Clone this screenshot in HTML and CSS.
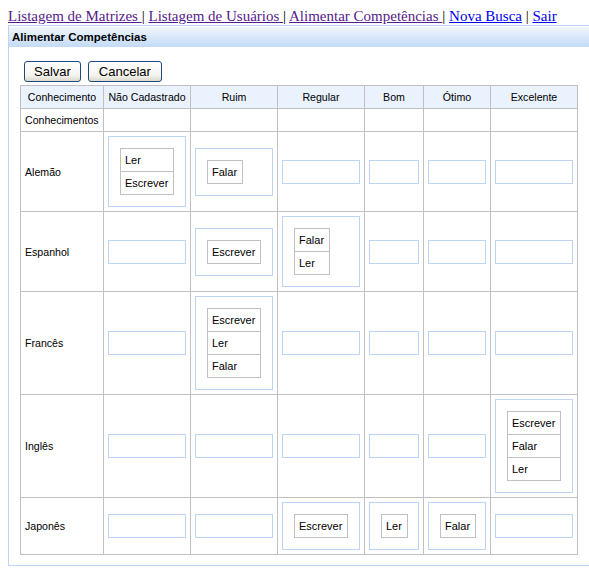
FILE: index.html
```html
<!DOCTYPE html>
<html lang="pt">
<head>
<meta charset="utf-8">
<title>Alimentar Competências</title>
<link rel="stylesheet" href="styles.css">
</head>
<body>
<div class="nav"><a class="visited" href="#">Listagem de Matrizes </a>| <a class="visited" href="#">Listagem de Usuários </a>| <a class="visited" href="#">Alimentar Competências </a>| <a href="#">Nova Busca</a> | <a href="#">Sair</a></div>
<div class="panel">
  <div class="panel-head">Alimentar Competências</div>
  <div class="panel-body">
    <div class="toolbar">
      <button class="btn" type="button">Salvar</button>
      <button class="btn" type="button">Cancelar</button>
    </div>
    <table class="grid">
      <thead>
        <tr>
          <th class="c1">Conhecimento</th>
          <th class="c2">Não Cadastrado</th>
          <th class="c3">Ruim</th>
          <th class="c4">Regular</th>
          <th class="c5">Bom</th>
          <th class="c6">Ótimo</th>
          <th class="c7">Excelente</th>
        </tr>
      </thead>
      <tbody>
        <tr>
          <td class="label">Conhecimentos</td>
          <td></td><td></td><td></td><td></td><td></td><td></td>
        </tr>
        <tr>
          <td class="label">Alemão</td>
          <td><div class="zone"><div class="list"><div class="item">Ler</div><div class="item">Escrever</div></div></div></td>
          <td><div class="zone"><div class="list"><div class="item">Falar</div></div></div></td>
          <td><div class="zone"></div></td>
          <td><div class="zone"></div></td>
          <td><div class="zone"></div></td>
          <td><div class="zone"></div></td>
        </tr>
        <tr>
          <td class="label">Espanhol</td>
          <td><div class="zone"></div></td>
          <td><div class="zone"><div class="list"><div class="item">Escrever</div></div></div></td>
          <td><div class="zone"><div class="list"><div class="item">Falar</div><div class="item">Ler</div></div></div></td>
          <td><div class="zone"></div></td>
          <td><div class="zone"></div></td>
          <td><div class="zone"></div></td>
        </tr>
        <tr>
          <td class="label">Francês</td>
          <td><div class="zone"></div></td>
          <td><div class="zone"><div class="list"><div class="item">Escrever</div><div class="item">Ler</div><div class="item">Falar</div></div></div></td>
          <td><div class="zone"></div></td>
          <td><div class="zone"></div></td>
          <td><div class="zone"></div></td>
          <td><div class="zone"></div></td>
        </tr>
        <tr>
          <td class="label">Inglês</td>
          <td><div class="zone"></div></td>
          <td><div class="zone"></div></td>
          <td><div class="zone"></div></td>
          <td><div class="zone"></div></td>
          <td><div class="zone"></div></td>
          <td><div class="zone"><div class="list"><div class="item">Escrever</div><div class="item">Falar</div><div class="item">Ler</div></div></div></td>
        </tr>
        <tr>
          <td class="label">Japonês</td>
          <td><div class="zone"></div></td>
          <td><div class="zone"></div></td>
          <td><div class="zone"><div class="list"><div class="item">Escrever</div></div></div></td>
          <td><div class="zone"><div class="list"><div class="item">Ler</div></div></div></td>
          <td><div class="zone"><div class="list"><div class="item">Falar</div></div></div></td>
          <td><div class="zone"></div></td>
        </tr>
      </tbody>
    </table>
  </div>
</div>
</body>
</html>
```

FILE: styles.css
```css
html, body {
  background: #ffffff;
}
body {
  margin: 8px 0 0 8px;
  font-family: "Liberation Sans", Arial, sans-serif;
  color: #000;
}
.nav {
  font-family: "Liberation Serif", "Times New Roman", serif;
  font-size: 15px;
  line-height: 17px;
  height: 17px;
  white-space: nowrap;
  color: #000;
}
.nav a {
  color: #0000ee;
  text-decoration: underline;
}
.nav a.visited {
  color: #551a8b;
}
.panel {
  border: 1px solid #bcd5f5;
  border-right: none;
}
.panel-head {
  height: 20px;
  border-top: 1px solid #ffffff;
  background: linear-gradient(#f0f6fe, #c3dbf7);
  font-weight: bold;
  font-size: 11.5px;
  line-height: 20px;
  padding-left: 3px;
  color: #000;
}
.panel-body {
  padding: 14px 0 10px 11px;
}
.toolbar {
  display: flex;
  gap: 7px;
  margin-left: 4px;
  margin-bottom: 3px;
}
.btn {
  height: 21px;
  padding: 0 9px;
  margin: 0;
  border: 1px solid #1c4a7c;
  border-radius: 3px;
  background: linear-gradient(#ffffff, #f4f3ee 70%, #dcd8cc);
  font-family: "Liberation Sans", Arial, sans-serif;
  font-size: 13px;
  line-height: 19px;
  color: #000;
}
.btn + .btn {
  padding: 0 10px;
}
.grid {
  table-layout: fixed;
  border-collapse: separate;
  border-spacing: 0;
  border-top: 1px solid #c0c0c0;
  border-left: 1px solid #c0c0c0;
  width: 558px;
  font-size: 10.6px;
  line-height: 14px;
}
.grid th, .grid td {
  box-sizing: border-box;
  border-right: 1px solid #c0c0c0;
  border-bottom: 1px solid #c0c0c0;
  padding: 4px;
  vertical-align: middle;
  white-space: nowrap;
}
.grid th {
  background: #eaf2fd;
  font-weight: normal;
  text-align: center;
  padding: 4px 0;
}
.c1 { width: 83px; }
.c2 { width: 87px; }
.c3 { width: 87px; }
.c4 { width: 87px; }
.c5 { width: 59px; }
.c6 { width: 67px; }
.c7 { width: 87px; }
.grid td.label {
  text-align: left;
}
.zone {
  border: 1px solid #bcd5f5;
  padding: 11px;
}
.list {
  width: max-content;
  border: 1px solid #c0c0c0;
}
.item {
  height: 22px;
  line-height: 22px;
  padding: 0 5px 0 4px;
  font-size: 11px;
  white-space: nowrap;
}
.item + .item {
  border-top: 1px solid #c0c0c0;
}
```
